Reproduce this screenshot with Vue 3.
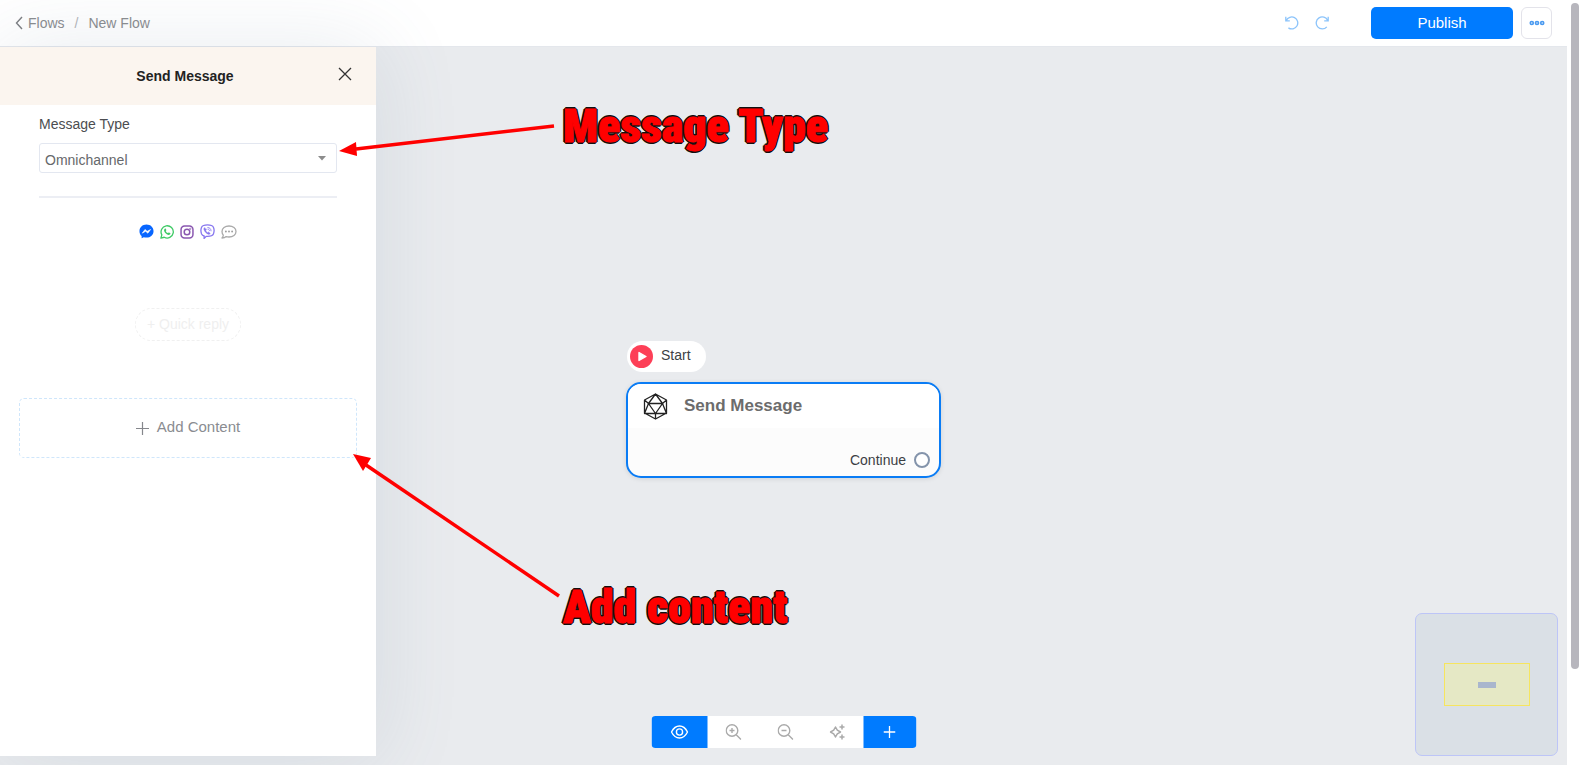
<script setup>
import { ref } from 'vue'

const messageType = ref('Omnichannel')
const messageTypes = ['Omnichannel', 'Messenger', 'WhatsApp', 'Instagram', 'Viber', 'SMS']
</script>

<template>
  <div class="shell">
    <div class="page">
      <header class="topbar">
        <nav class="crumbs" aria-label="Breadcrumb">
          <a href="#" class="back">
            <svg width="8" height="14" viewBox="0 0 8 14"><path d="M7 1 1.500 7 7 13" fill="none" stroke="#7d7f83" stroke-width="1.400" /></svg>
            Flows
          </a>
          <span class="sep">/</span>
          <span>New Flow</span>
        </nav>
        <div class="actions">
          <button class="icon-btn" aria-label="Undo">
            <svg width="14" height="14" viewBox="0 0 14 14" fill="none" stroke="#8cc4fb" stroke-width="1.300"><path d="M.8.800v4h4M1.300 4.500A6 6 0 1 1 3.400 11.900" /></svg>
          </button>
          <button class="icon-btn" aria-label="Redo">
            <svg width="14" height="14" viewBox="0 0 14 14" fill="none" stroke="#8cc4fb" stroke-width="1.300"><path d="M13.200.8v4h-4M12.700 4.500A6 6 0 1 0 11.800 10.800" /></svg>
          </button>
          <button class="publish">Publish</button>
          <button class="more" aria-label="More">
            <svg width="16" height="6" viewBox="0 0 16 6" fill="none" stroke="#4a9af0" stroke-width="1.700"><circle cx="2.800" cy="3" r="1.500" /><circle cx="8" cy="3" r="1.500" /><circle cx="13.200" cy="3" r="1.500" /></svg>
          </button>
        </div>
      </header>

      <main class="workspace">
        <aside class="panel">
          <div class="panel-head">
            <h2>Send Message</h2>
            <button class="close" aria-label="Close">
              <svg width="14" height="14" viewBox="0 0 14 14"><path d="M1 1 13 13M13 1 1 13" stroke="#333" stroke-width="1.300" /></svg>
            </button>
          </div>
          <div class="field">
            <label for="message-type">Message Type</label>
            <div class="select-wrap">
              <select id="message-type" v-model="messageType">
                <option v-for="t in messageTypes" :key="t">{{ t }}</option>
              </select>
              <svg class="caret" width="8" height="5" viewBox="0 0 8 5"><path d="M0 0h8L4 4.500z" fill="#8c8c8c" /></svg>
            </div>
          </div>
          <div class="channels">
            <svg width="15" height="15" viewBox="0 0 16 16"><path d="M8 .5C3.600.5.500 3.600.500 7.600c0 2.100.9 3.900 2.300 5.200v2.400l2.300-1.100c.9.3 1.900.4 2.900.4 4.400 0 7.500-3.100 7.500-6.900C15.500 3.600 12.400.5 8 .5z" fill="#0866ff" /><path d="m3.400 9.800 3-4 2.300 2 3.700-2-3 4-2.300-2z" fill="#fff" stroke="#fff" stroke-width=".6" stroke-linejoin="round" /></svg>
            <svg width="14" height="14" viewBox="0 0 16 16"><path d="m1 15 1.100-3.700A7 7 0 1 1 4.800 14z" fill="none" stroke="#3fca66" stroke-width="1.500" stroke-linejoin="round" /><path d="M5.500 4.200c.5-.3 1-.2 1.200.3l.6 1.300c.1.500-.6.900-.6 1.200.5 1 1.200 1.700 2.300 2.200.4 0 .8-.9 1.200-.7l1.400.7c.5.300.3 1.100-.1 1.500-.9.900-2.300.7-3.700-.1C6.300 9.700 5 8.200 4.700 6.600c-.2-1 .1-1.900.8-2.400z" fill="#3fca66" /></svg>
            <svg width="14" height="14" viewBox="0 0 16 16" fill="none" stroke="#8a57b0" stroke-width="1.700"><rect x="1.200" y="1.200" width="13.600" height="13.600" rx="4" /><circle cx="8" cy="8" r="3.200" /><circle cx="11.800" cy="4.200" r=".3" /></svg>
            <svg width="15" height="15" viewBox="0 0 16 16" fill="none" stroke="#8777ef" stroke-width="1.400" stroke-linecap="round"><path d="M8 1C4.500 1 2.600 1.500 1.700 3.400 1 5 1 8.800 1.700 10.600c.5 1.200 1.500 1.900 2.700 2.200V15.400l2.200-2.200c3.600.2 6.700 0 7.700-2.500.7-1.800.7-5.700 0-7.300C13.400 1.500 11.500 1 8 1z" /><path d="M4.800 4c-.8.600-.8 1.300-.4 2.300.8 2 2.300 3.600 4.300 4.500 1 .4 1.700.2 2.200-.6l-1.800-1.600-1 .7C6.900 8.700 6.500 8 6.100 7l.8-.9z" fill="#8777ef" stroke-width=".6" /><path d="M8.300 3.700c2.200.1 3.400 1.500 3.500 3.600M8.600 5.500c1 .1 1.400.6 1.500 1.600" stroke-width=".9" /></svg>
            <svg width="16" height="14" viewBox="0 0 16 14"><path d="M8 1c4 0 7 2.300 7 5.500S12 12 8 12c-1 0-2-.1-2.800-.4C4.200 12.500 2.800 13 1 13c.8-.9 1.200-1.800 1.300-2.800C1.500 9.200 1 7.900 1 6.500 1 3.300 4 1 8 1z" fill="none" stroke="#aaa" stroke-width="1.300" stroke-linejoin="round" /><g fill="#999"><circle cx="4.900" cy="6.500" r=".9" /><circle cx="8" cy="6.500" r=".9" /><circle cx="11.100" cy="6.500" r=".9" /></g></svg>
          </div>
          <button class="quick">+ Quick reply</button>
          <button class="add">
            <svg width="13" height="13" viewBox="0 0 13 13"><path d="M6.500 0v13M0 6.500h13" stroke="#85878c" stroke-width="1.200" /></svg>
            <span>Add Content</span>
          </button>
        </aside>

        <section class="canvas" aria-label="Flow canvas">
          <div class="start">
            <svg width="23" height="23" viewBox="0 0 23 23"><circle cx="11.500" cy="11.500" r="11.500" fill="#fd3f57" /><path d="M9 7.500v8l7-4z" fill="#fff" stroke="#fff" stroke-width="1.400" stroke-linejoin="round" /></svg>
            <span>Start</span>
          </div>
          <article class="node">
            <div class="node-head">
              <svg width="25" height="27" viewBox="0 0 25 27" fill="none" stroke="#222" stroke-width="1.500" stroke-linejoin="round"><path d="M12.500 1 23.500 7v13l-11 6-11-6V7zM12.500 1 5.500 10.500 1.500 20.500h22l-4-10zM1.500 7l4 3.500h14l4-3.500M5.500 10.500l7 10 7-10M12.500 20.500V26" stroke-width="1.300" /></svg>
              <h3>Send Message</h3>
            </div>
            <div class="node-foot">
              Continue
              <span class="port"></span>
            </div>
          </article>
        </section>

        <div class="toolbar">
          <button class="tool on eye" aria-label="Preview">
            <svg width="18" height="14" viewBox="0 0 18 14" fill="none" stroke="#fff" stroke-width="1.400"><path d="M1 7c2-4 4.700-6 8-6s6 2 8 6c-2 4-4.700 6-8 6s-6-2-8-6z" /><circle cx="9" cy="7" r="3.100" /></svg>
          </button>
          <button class="tool" aria-label="Zoom in">
            <svg width="16" height="16" viewBox="0 0 16 16" fill="none" stroke="#aaa" stroke-width="1.400"><circle cx="6.500" cy="6.500" r="5.800" /><path d="m10.700 10.700 4.800 4.800M6.500 4v5M4 6.500h5" /></svg>
          </button>
          <button class="tool" aria-label="Zoom out">
            <svg width="16" height="16" viewBox="0 0 16 16" fill="none" stroke="#aaa" stroke-width="1.400"><circle cx="6.500" cy="6.500" r="5.800" /><path d="m10.700 10.700 4.800 4.800M4 6.500h5" /></svg>
          </button>
          <button class="tool" aria-label="Auto arrange">
            <svg width="16" height="16" viewBox="0 0 16 16" fill="none" stroke="#aaa" stroke-width="1.500" stroke-linejoin="round"><path d="M6 3 7.800 6.200 11 8 7.800 9.800 6 13 4.200 9.800 1 8l3.200-1.800zM12.500.5v5M10 3h5M12.500 10.500v5M10 13h5" /></svg>
          </button>
          <button class="tool on plus" aria-label="Add">
            <svg width="12" height="12" viewBox="0 0 12 12"><path d="M6 0v12M0 6h12" stroke="#fff" stroke-width="1.300" /></svg>
          </button>
        </div>

        <div class="minimap"><div class="view"><div class="dot"></div></div></div>

        <svg class="arrows" width="600" height="600" viewBox="0 0 600 600">
          <g stroke="#f00" stroke-width="3.500">
            <path d="M554 79 356 102" />
            <path d="M559 549 366 418" />
          </g>
          <path d="M339 104 356 95 357 109z" fill="#f00" />
          <path d="M353 407 371 411 363 424z" fill="#f00" />
        </svg>
        <p class="note note-type">Message Type</p>
        <p class="note note-add">Add content</p>
      </main>
    </div>
    <div class="scroll"><div class="thumb"></div></div>
  </div>
</template>

<style>
body { margin: 0; }
</style>

<style scoped>
* { box-sizing: border-box; }
svg { display: block; flex: none; }
.shell {
  display: flex;
  min-height: 100vh;
  background: #fff;
  color: #3c3f44;
  font: 14px/20px "Liberation Sans", Arial, sans-serif;
}
button {
  display: flex;
  align-items: center;
  justify-content: center;
  padding: 0;
  border: 0;
  background: none;
  font: inherit;
  color: inherit;
}
h2, h3, p { margin: 0; }
.page { flex: 1; display: flex; flex-direction: column; overflow: hidden; }
.topbar {
  display: flex;
  justify-content: space-between;
  align-items: center;
  height: 47px;
  padding: 0 15px;
  border-bottom: 1px solid #e4e7ec;
  background: #fff;
}
.crumbs { display: flex; align-items: center; gap: 10px; color: #8b8d90; }
.back { display: flex; align-items: center; gap: 5px; color: inherit; text-decoration: none; }
.sep { color: #b4b6ba; }
.actions { display: flex; align-items: center; }
.icon-btn { margin-right: 16px; }
.publish {
  width: 142px;
  height: 32px;
  margin: 0 8px 0 26px;
  border-radius: 5px;
  background: #007bff;
  color: #fff;
  font-size: 15px;
}
.more { width: 31px; height: 32px; border: 1px solid #e3e3ea; border-radius: 6px; }

.workspace { position: relative; flex: 1; display: flex; background: #e9ebee; }
.panel {
  position: relative;
  width: 376px;
  margin-bottom: 9px;
  background: #fff;
  box-shadow: 0 0 80px rgba(90, 120, 150, 0.14);
}
.panel-head {
  position: relative;
  display: flex;
  align-items: center;
  justify-content: center;
  height: 58px;
  padding-right: 6px;
  background: #fbf5ef;
}
.panel-head h2 { font-size: 14px; font-weight: 700; color: #222; }
.close { position: absolute; top: 20px; right: 24px; }
.field { margin: 0 39px; padding: 9px 0 23px; border-bottom: 2px solid #eceef4; }
.field label { display: block; margin-bottom: 9px; color: #4b4d50; }
.select-wrap { position: relative; }
select {
  display: block;
  width: 100%;
  height: 30px;
  padding: 4px 24px 0 5px;
  border: 1px solid #e3e7f0;
  border-radius: 3px;
  background: #fff;
  color: #66686b;
  font: inherit;
  appearance: none;
}
.caret { position: absolute; right: 11px; top: 13px; }
.channels { display: flex; align-items: center; justify-content: center; gap: 6px; margin-top: 26px; }
.quick {
  width: 106px;
  height: 33px;
  margin: 69px auto 57px;
  padding-bottom: 2px;
  border: 1px dashed #f0f0f0;
  border-radius: 17px;
  color: #efefef;
}
.add {
  width: 338px;
  height: 60px;
  margin: 0 auto;
  padding-bottom: 2px;
  gap: 8px;
  border: 1px dashed #cfe6fb;
  border-radius: 5px;
  color: #8a8c91;
  font-size: 15px;
}
.add svg { margin-top: 3px; }

.start {
  position: absolute;
  left: 627px;
  top: 294px;
  display: flex;
  align-items: center;
  gap: 8px;
  height: 31px;
  padding: 0 15px 0 3px;
  border-radius: 16px;
  background: #fff;
}
.start span { padding-bottom: 3px; }
.node {
  position: absolute;
  left: 626px;
  top: 335px;
  width: 315px;
  border: 2px solid #0a7cf5;
  border-radius: 15px;
  background: #fcfcfc;
  box-shadow: 0 1px 5px rgba(0, 0, 0, 0.1);
  overflow: hidden;
}
.node-head { display: flex; align-items: center; gap: 16px; height: 44px; padding-left: 15px; background: #fff; }
.node-head h3 { font-size: 17px; color: #6c6c6c; }
.node-foot {
  display: flex;
  align-items: center;
  justify-content: flex-end;
  gap: 8px;
  height: 48px;
  padding: 16px 9px 0 0;
}
.port { width: 16px; height: 16px; border: 2px solid #8494ab; border-radius: 50%; background: #fff; }

.toolbar {
  position: absolute;
  left: 50%;
  bottom: 17px;
  transform: translateX(-50%);
  display: flex;
  border-radius: 4px;
  background: #fff;
  overflow: hidden;
}
.tool { width: 52px; height: 32px; }
.on { background: #007bff; }
.eye { width: 56px; }
.plus { width: 53px; }

.minimap {
  position: absolute;
  right: 9px;
  bottom: 9px;
  display: grid;
  place-items: center;
  width: 143px;
  height: 143px;
  border: 1px solid #bdc5f7;
  border-radius: 7px;
  background: #dae0e6;
}
.view {
  display: grid;
  place-items: center;
  width: 86px;
  height: 43px;
  border: 1px solid #f6e55f;
  background: #e5e8c5;
}
.dot { width: 18px; height: 6px; background: #a9b6cd; }

.arrows { position: absolute; left: 0; top: 0; pointer-events: none; }
.note {
  position: absolute;
  left: 563px;
  font: 900 46px/56px Impact, "Roboto Condensed", Roboto, "Liberation Sans", sans-serif;
  color: #f00;
  white-space: nowrap;
  -webkit-text-stroke: 1px #f00;
  text-shadow: 2px 0 #111, -2px 0 #111, 0 2px #111, 0 -2px #111,
    1px 1px #111, -1px 1px #111, 1px -1px #111, -1px -1px #111;
}
.note-type { top: 51px; }
.note-add { top: 532px; }

.scroll { width: 16px; padding: 3px 4px; background: #fff; }
.thumb { height: 666px; border-radius: 4px; background: #b7b6bd; }
</style>
